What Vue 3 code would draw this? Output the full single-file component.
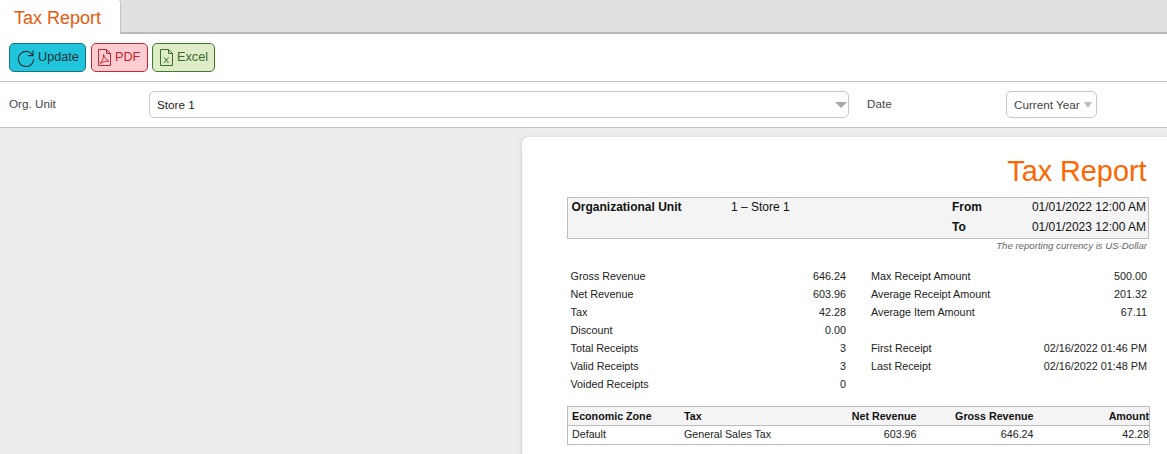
<script setup>
const summaryLeft = [
  ['Gross Revenue', '646.24'],
  ['Net Revenue', '603.96'],
  ['Tax', '42.28'],
  ['Discount', '0.00'],
  ['Total Receipts', '3'],
  ['Valid Receipts', '3'],
  ['Voided Receipts', '0'],
]
const summaryRight = [
  ['Max Receipt Amount', '500.00'],
  ['Average Receipt Amount', '201.32'],
  ['Average Item Amount', '67.11'],
  ['', ''],
  ['First Receipt', '02/16/2022 01:46 PM'],
  ['Last Receipt', '02/16/2022 01:48 PM'],
]
</script>

<template>
  <div class="app">
    <div class="tabbar">
      <div class="tab">Tax Report</div>
    </div>
    <div class="toolbar">
      <button class="btn update">
        <svg width="18" height="18" viewBox="0 0 18 18" fill="none" stroke="#17343c" stroke-width="1.1">
          <path d="M15.6 6.2A7.6 7.6 0 1 0 16.6 10" />
          <path d="M16 1.5V6.6H10.9" />
        </svg>
        <span>Update</span>
      </button>
      <button class="btn pdf">
        <svg width="14" height="17" viewBox="0 0 14 17" fill="none" stroke="#c6262e" stroke-width="1">
          <path d="M.5 .5H8.5L12.5 4.5V16.5H.5Z" />
          <path d="M8.5 .5V4.5H12.5" />
          <path d="M5.6 5.5C5.6 9 4.4 12 2.2 14.4C5.2 12.6 8 12 10.8 12.2C8.4 11 6.6 8.5 5.6 5.5Z" />
        </svg>
        <span>PDF</span>
      </button>
      <button class="btn excel">
        <svg width="14" height="17" viewBox="0 0 14 17" fill="none" stroke="#3d6a2a" stroke-width="1">
          <path d="M.5 .5H8.5L12.5 4.5V16.5H.5Z" />
          <path d="M8.5 .5V4.5H12.5" />
          <path d="M4 8.5L8.6 14M8.6 8.5L4 14" />
        </svg>
        <span>Excel</span>
      </button>
    </div>
    <div class="filters">
      <label class="lbl org">Org. Unit</label>
      <div class="select store">
        <span>Store 1</span>
        <i class="arrow big"></i>
      </div>
      <label class="lbl date">Date</label>
      <div class="select year">
        <span>Current Year</span>
        <i class="arrow"></i>
      </div>
    </div>
    <div class="stage">
      <div class="sheet">
        <h1 class="title">Tax Report</h1>
        <div class="head-box">
          <div class="head-col unit">
            <b class="unit-label">Organizational Unit</b>
            <span>1 – Store 1</span>
          </div>
          <div class="head-col period">
            <b>From</b><span>01/01/2022 12:00 AM</span>
            <b>To</b><span>01/01/2023 12:00 AM</span>
          </div>
        </div>
        <div class="note">The reporting currency is US-Dollar</div>
        <div class="summary">
          <div class="sum-col left">
            <div v-for="r in summaryLeft" :key="r[0]" class="sum-row">
              <span>{{ r[0] }}</span><span>{{ r[1] }}</span>
            </div>
          </div>
          <div class="sum-col right">
            <div v-for="(r, i) in summaryRight" :key="i" class="sum-row">
              <span>{{ r[0] }}</span><span>{{ r[1] }}</span>
            </div>
          </div>
        </div>
        <table class="zones">
          <thead>
            <tr>
              <th class="c1">Economic Zone</th>
              <th class="c2">Tax</th>
              <th class="num c3">Net Revenue</th>
              <th class="num c4">Gross Revenue</th>
              <th class="num c5">Amount</th>
            </tr>
          </thead>
          <tbody>
            <tr>
              <td>Default</td>
              <td>General Sales Tax</td>
              <td class="num">603.96</td>
              <td class="num">646.24</td>
              <td class="num">42.28</td>
            </tr>
          </tbody>
        </table>
      </div>
    </div>
  </div>
</template>

<style scoped>
.app {
  width: 1167px;
  height: 454px;
  overflow: hidden;
  display: flex;
  flex-direction: column;
  background: #fff;
  font-family: "Liberation Sans", Arial, sans-serif;
}
.tabbar {
  height: 34px;
  box-sizing: border-box;
  background: #e0e0e0;
  border-bottom: 2px solid #b9b9b9;
  display: flex;
  flex: none;
}
.tab {
  width: 121px;
  height: 34px;
  box-sizing: border-box;
  background: #fff;
  border-right: 1px solid #c4c4c4;
  border-radius: 0 3px 0 0;
  padding: 8px 0 0 14px;
  color: #e8590c;
  font-size: 18px;
  line-height: 21px;
}
.toolbar {
  height: 47px;
  flex: none;
  box-sizing: border-box;
  padding: 9px 9px 0;
  display: flex;
  align-items: flex-start;
}
.btn {
  height: 29px;
  box-sizing: border-box;
  border-radius: 5px;
  border: 1px solid;
  font: 12.7px "Liberation Sans", Arial, sans-serif;
  display: flex;
  align-items: center;
  padding: 0;
}
.btn span {
  margin-top: -2px;
}
.update {
  width: 77px;
  background: #20c5db;
  border-color: #17727f;
  color: #17343c;
  gap: 3px;
  padding-left: 7px;
}
.pdf {
  width: 57px;
  margin-left: 5px;
  background: #ffccd2;
  border-color: #c6262e;
  color: #c6262e;
  gap: 3px;
  padding-left: 6px;
}
.excel {
  width: 63px;
  margin-left: 4px;
  background: #deedc8;
  border-color: #3d7a2a;
  color: #3d6a2a;
  gap: 3px;
  padding-left: 7px;
}
.filters {
  height: 47px;
  flex: none;
  box-sizing: border-box;
  border-top: 1px solid #c4c4c4;
  border-bottom: 1px solid #c4c4c4;
  display: flex;
  align-items: flex-start;
}
.lbl {
  font-size: 11.7px;
  color: #444;
  line-height: 14px;
  margin-top: 15px;
}
.org {
  margin-left: 9px;
  width: 140px;
}
.select {
  margin-top: 9px;
  height: 27px;
  box-sizing: border-box;
  border: 1px solid #c8c8c8;
  border-radius: 5px;
  font-size: 11.7px;
  color: #333;
  display: flex;
  align-items: center;
  justify-content: space-between;
  padding: 0 0 1px 7px;
}
.store {
  width: 700px;
  padding-right: 1px;
  color: #222;
}
.date {
  margin-left: 18px;
  width: 139px;
}
.year {
  width: 91px;
  padding-right: 4px;
  color: #444;
}
.arrow {
  width: 0;
  height: 0;
  border-left: 4px solid transparent;
  border-right: 4px solid transparent;
  border-top: 6px solid #bbb;
  margin-top: 2px;
}
.arrow.big {
  border-left-width: 6px;
  border-right-width: 6px;
  border-top: 6px solid #a8a8a8;
}
.stage {
  flex: 1;
  background: #ededed;
  padding: 9px 0 0 522px;
  overflow: hidden;
}
.sheet {
  width: 700px;
  height: 400px;
  box-sizing: border-box;
  background: #fff;
  border-radius: 6px 0 0 0;
  box-shadow: -1px 0 3px rgba(0, 0, 0, .12);
  padding: 17px 0 0 45px;
  font-size: 10.8px;
  color: #222;
}
.title {
  margin: 0;
  width: 579.5px;
  text-align: right;
  font-size: 28.8px;
  line-height: 34px;
  font-weight: 400;
  color: #ff6600;
}
.head-box {
  margin-top: 9px;
  width: 582px;
  height: 42px;
  box-sizing: border-box;
  background: #f4f4f4;
  border: 1px solid #bdbdbd;
  display: flex;
  font-size: 12px;
  color: #111;
}
.head-col {
  line-height: 20px;
  margin-top: -1px;
  white-space: nowrap;
}
.unit {
  display: flex;
  padding-left: 3.5px;
  width: 384px;
  box-sizing: border-box;
}
.unit-label {
  width: 159.5px;
}
.period {
  display: grid;
  grid-template-columns: 80px 114px;
  align-content: start;
}
.period span {
  text-align: right;
  justify-self: end;
}
.note {
  width: 580px;
  margin-top: 1px;
  text-align: right;
  font-size: 9.65px;
  line-height: 12px;
  font-style: italic;
  color: #666;
}
.summary {
  margin-top: 15px;
  margin-left: 3.5px;
  width: 580px;
  display: flex;
}
.sum-col {
  display: flex;
  flex-direction: column;
}
.sum-row {
  height: 18px;
  line-height: 18px;
  display: flex;
  justify-content: space-between;
}
.left {
  width: 275.5px;
}
.right {
  width: 276px;
  margin-left: 25px;
}
.zones {
  margin-top: 13px;
  width: 583px;
  border-collapse: collapse;
  table-layout: fixed;
  border: 1px solid #bdbdbd;
  font-size: 10.7px;
  color: #222;
}
.zones th {
  background: #f4f4f4;
  text-align: left;
  color: #111;
  border-bottom: 1px solid #bdbdbd;
}
.zones th,
.zones td {
  height: 18px;
  padding: 0 0 0 4px;
  line-height: 12px;
}
.zones td {
  padding-bottom: 3px;
  height: 15px;
}
.zones .num {
  text-align: right;
  padding-left: 0;
}
.c1 { width: 108px; }
.c2 { width: 116px; }
.c3 { width: 116.5px; }
.c4 { width: 117px; }
</style>

<style>
html, body { margin: 0; background: #fff; }
</style>
